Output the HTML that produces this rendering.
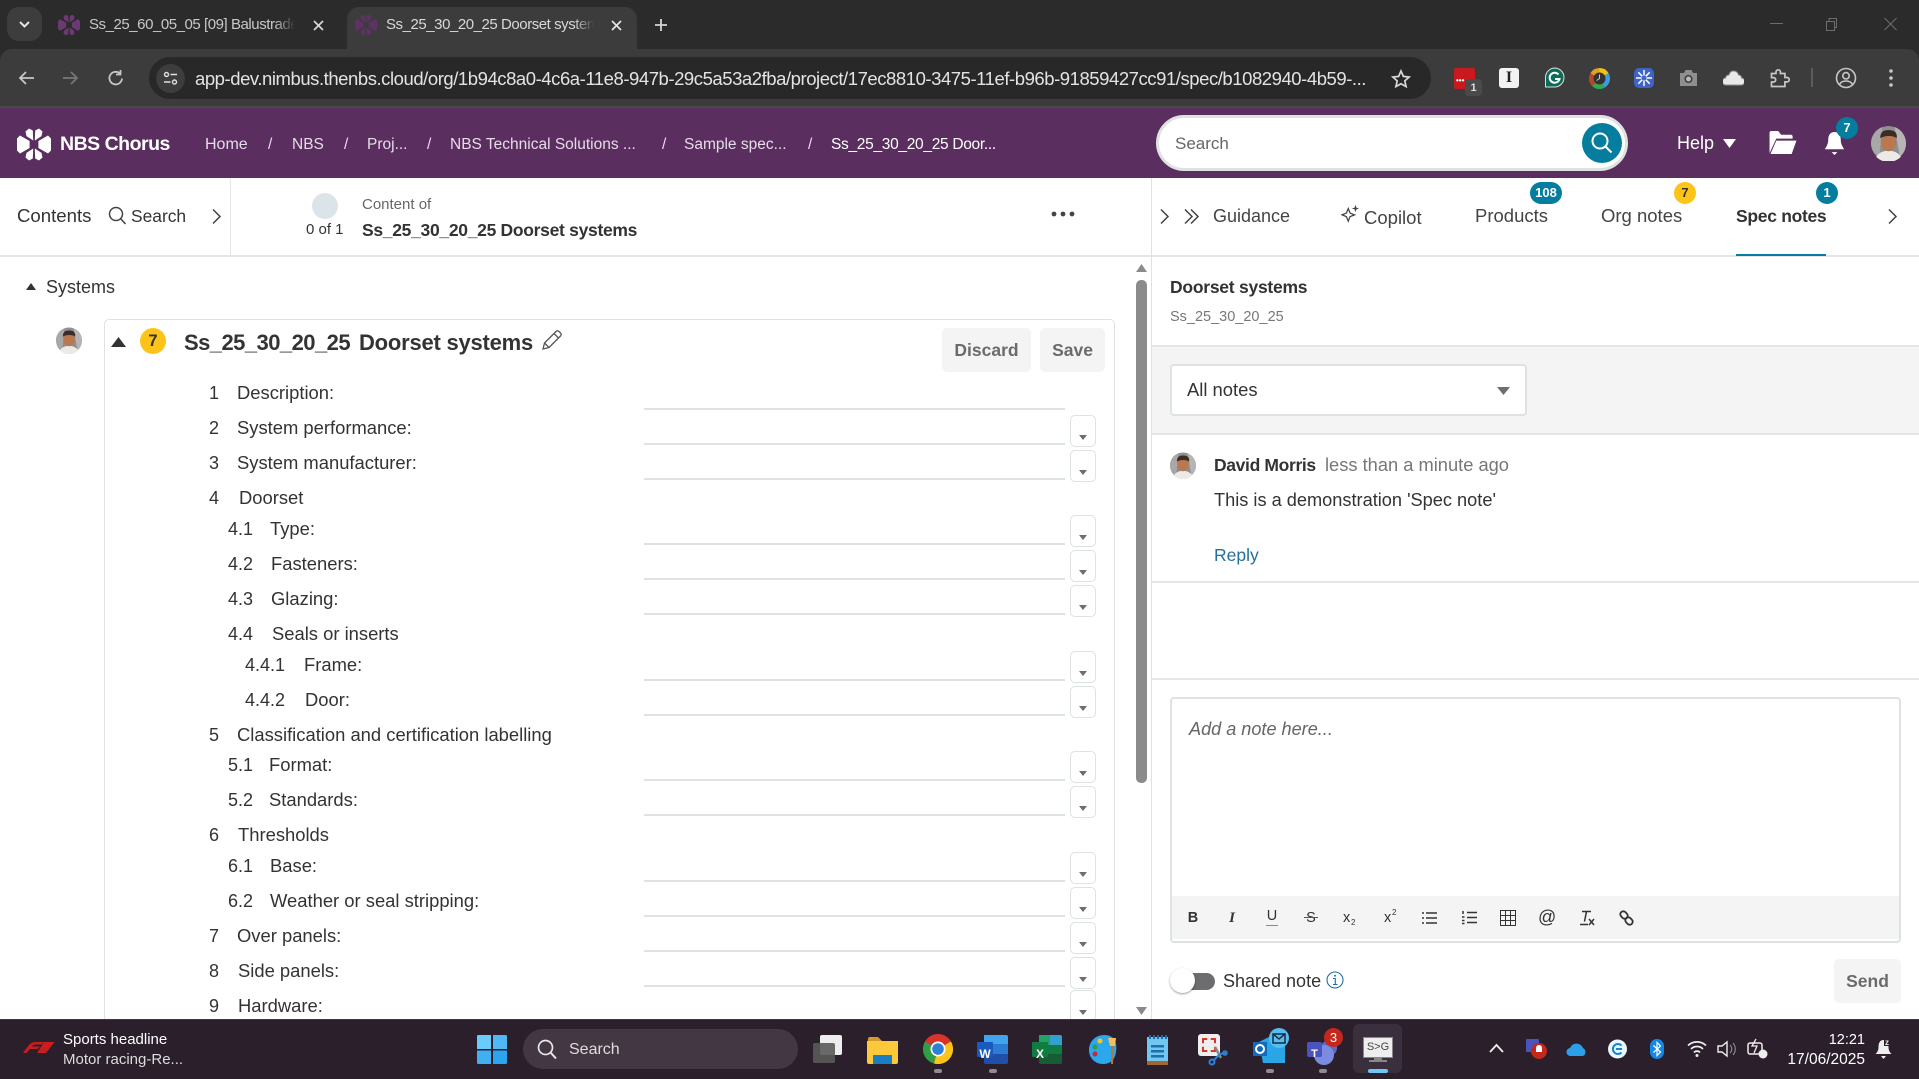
<!DOCTYPE html>
<html lang="en"><head><meta charset="utf-8"><title>Ss_25_30_20_25 Doorset systems</title>
<style>
html,body{margin:0;padding:0;background:#fff}
#p{position:relative;width:1919px;height:1079px;overflow:hidden;font-family:"Liberation Sans",sans-serif;color:#2b2b2b;background:#fff}
#p div,#p svg,#p span{position:absolute}
.t{white-space:nowrap;line-height:20px;height:20px}
.l{font-size:18.4px;color:#333}
.n{font-size:18px;color:#333}
.r{left:644px;width:421px;height:2px;background:#dde2e2}
.b{left:1070px;width:24px;height:30px;border:1px solid #dde2e2;border-radius:5px;background:#fff}
.b:after{content:"";position:absolute;left:8px;bottom:6px;border-left:4.5px solid transparent;border-right:4.5px solid transparent;border-top:5px solid #6e6e6e}
.g{width:34px;height:34px;border-radius:6px}
.tab{top:206px;font-size:18.5px;color:#444}
.bc{top:135px;font-size:15.5px;color:#e6dce8}
</style></head><body><div id="p">
<svg width="0" height="0" style="position:absolute"><defs>
<symbol id="logo" viewBox="0 0 34 34"><g fill="currentColor">
<path d="M12 1 15.8 3 16.2 13 9.5 8.600 8.500 4z"/><path d="M22 1 18.2 3 17.8 13 24.5 8.600 25.500 4z"/><path d="M0 11 3 8 12.600 13.500 12.600 20.500 3 26 0 23z"/><path d="M34 11 31 8 21.400 13.500 21.400 20.500 31 26 34 23z"/><path d="M12 33 15.800 31 16.200 21 9.500 25.400 8.500 30z"/><path d="M22 33 18.200 31 17.800 21 24.500 25.400 25.500 30z"/></g></symbol>
<symbol id="face" viewBox="0 0 34 34"><circle cx="17" cy="17" r="17" fill="#8f8f8f"/><path d="M0 17A17 17 0 0 1 11 1L8 30A17 17 0 0 1 0 17z" fill="#a8a8a8"/><path d="M23 1A17 17 0 0 1 34 17 17 17 0 0 1 28 30z" fill="#b5b5b5"/><path d="M5 30C8 25 13 24 17 24s9 1 12 6A17 17 0 0 1 5 30z" fill="#eceae6"/><ellipse cx="17" cy="15" rx="7.500" ry="9.500" fill="#b9784f"/><path d="M9 12C9 5 13 4 17 4s9 1 8 8c-3-3-12-3-16 0z" fill="#3b2c28"/></symbol>
</defs></svg>

<!-- tab strip -->
<div style="left:0;top:0;width:1919px;height:70px;background:#2b2b2b"></div>
<div style="left:7px;top:7px;width:35px;height:34px;background:#3d3d3d;border-radius:12px"></div>
<svg style="left:18px;top:20px" width="13" height="9" viewBox="0 0 13 9"><path d="M2 2l4.500 4.500L11 2" fill="none" stroke="#e6e6e6" stroke-width="2"/></svg>
<svg style="left:58px;top:14px;color:#6b3a72" width="22" height="22"><use href="#logo"/></svg>
<div class="t" style="left:89px;top:15px;width:206px;overflow:hidden;font-size:15px;letter-spacing:-.45px;color:#c8c8c8">Ss_25_60_05_05 [09] Balustrade systems</div>
<div style="left:275px;top:12px;width:20px;height:26px;background:linear-gradient(90deg,rgba(43,43,43,0),#2b2b2b)"></div>
<svg style="left:312px;top:19px" width="13" height="13" viewBox="0 0 13 13"><path d="M2 2l9 9M11 2l-9 9" stroke="#d8d8d8" stroke-width="1.700"/></svg>
<div style="left:347px;top:7px;width:290px;height:43px;background:#3c3c3c;border-radius:12px 12px 0 0"></div>
<svg style="left:355px;top:14px;color:#5f3266" width="22" height="22"><use href="#logo"/></svg>
<div class="t" style="left:386px;top:15px;width:208px;overflow:hidden;font-size:15px;letter-spacing:-.45px;color:#d8d8d8">Ss_25_30_20_25 Doorset systems</div>
<div style="left:574px;top:12px;width:20px;height:26px;background:linear-gradient(90deg,rgba(60,60,60,0),#3c3c3c)"></div>
<svg style="left:610px;top:19px" width="13" height="13" viewBox="0 0 13 13"><path d="M2 2l9 9M11 2l-9 9" stroke="#e6e6e6" stroke-width="1.700"/></svg>
<svg style="left:654px;top:18px" width="14" height="14" viewBox="0 0 14 14"><path d="M7 1v12M1 7h12" stroke="#d6d6d6" stroke-width="1.800"/></svg>
<div style="left:1770px;top:23px;width:13px;height:1px;background:#6d6d6d"></div>
<svg style="left:1825px;top:17px" width="13" height="14" viewBox="0 0 13 14"><path d="M1.500 4.500h8v9h-8zM4 4.500V1.500h7.500v9H9.500" fill="none" stroke="#6d6d6d"/></svg>
<svg style="left:1884px;top:17px" width="13" height="14" viewBox="0 0 13 14"><path d="M.5 1l12 12M12.500 1l-12 12" stroke="#6d6d6d"/></svg>

<!-- toolbar -->
<div style="left:0;top:49px;width:1919px;height:58px;background:#3c3c3c;border-radius:12px 12px 0 0"></div>
<div style="left:0;top:106px;width:1919px;height:2px;background:#4a4a4a"></div>
<svg style="left:17px;top:69px" width="18" height="18" viewBox="0 0 18 18"><path d="M17 9H3M9 3 3 9l6 6" fill="none" stroke="#c7c7c7" stroke-width="1.800"/></svg>
<svg style="left:62px;top:69px" width="18" height="18" viewBox="0 0 18 18"><path d="M1 9h14M9 3l6 6-6 6" fill="none" stroke="#777" stroke-width="1.800"/></svg>
<svg style="left:107px;top:69px" width="18" height="18" viewBox="0 0 18 18"><path d="M15 9.500A6.300 6.300 0 1 1 13.200 4.700M13.500 1v4.500H9" fill="none" stroke="#c7c7c7" stroke-width="1.800"/></svg>
<div style="left:149px;top:57px;width:1282px;height:42px;background:#282828;border-radius:22px"></div>
<div style="left:156px;top:64px;width:29px;height:29px;background:#3d3d3d;border-radius:50%"></div>
<svg style="left:163px;top:71px" width="15" height="15" viewBox="0 0 15 15"><g fill="none" stroke="#e0e0e0" stroke-width="1.400"><circle cx="3.500" cy="3.500" r="2"/><path d="M7.500 3.500H14M1 11h6.500"/><circle cx="11.500" cy="11" r="2"/></g></svg>
<div class="t" style="left:195px;top:69px;font-size:18.5px;letter-spacing:-.45px;color:#e3e3e3">app-dev.nimbus.thenbs.cloud/org/1b94c8a0-4c6a-11e8-947b-29c5a53a2fba/project/17ec8810-3475-11ef-b96b-91859427cc91/spec/b1082940-4b59-...</div>
<svg style="left:1391px;top:69px" width="20" height="20" viewBox="0 0 20 20"><path d="M10 2l2.400 5.400 5.800.6-4.400 3.900 1.300 5.700L10 14.700l-5.100 2.900 1.300-5.700L1.800 8l5.800-.6z" fill="none" stroke="#d8d8d8" stroke-width="1.700"/></svg>
<!-- extensions -->
<div style="left:1454px;top:68px;width:21px;height:21px;background:#c8191f;border-radius:2px"></div>
<div class="t" style="left:1456px;top:71px;font-size:8px;color:#fff;font-weight:bold">•••</div>
<div style="left:1465px;top:79px;width:17px;height:17px;background:#4a4a4a;border-radius:4px"></div>
<div class="t" style="left:1465px;top:78px;width:17px;text-align:center;font-size:11px;font-weight:bold;color:#ddd">1</div>
<div style="left:1499px;top:68px;width:20px;height:20px;background:#f2f2f2;border-radius:3px"></div>
<div class="t" style="left:1499px;top:68px;width:20px;text-align:center;font:bold 16px/20px 'Liberation Serif',serif;color:#222">I</div>
<svg style="left:1544px;top:67px" width="21" height="23" viewBox="0 0 21 23"><path d="M10.500 1A9.500 9.500 0 0 1 10.500 20H1.500V10.500A9.500 9.500 0 0 1 10.500 1z" fill="#0d6b5a" stroke="#ddd"/><path d="M14.500 7.500a5 5 0 1 0 1 4.500H11" fill="none" stroke="#fff" stroke-width="2"/></svg>
<svg style="left:1589px;top:68px" width="21" height="21" viewBox="0 0 21 21"><path d="M10.500 10.500V0A10.500 10.500 0 0 1 19.600 5.200z" fill="#f2c21a"/><path d="M10.500 10.500 19.600 5.200A10.500 10.500 0 0 1 15.700 19.600z" fill="#3a9fe0"/><path d="M10.500 10.500 15.700 19.600A10.500 10.500 0 0 1 3 18z" fill="#35a853"/><path d="M10.500 10.500 3 18A10.500 10.500 0 0 1 1.400 5.200z" fill="#b5482a"/><path d="M10.500 10.500 1.400 5.200A10.500 10.500 0 0 1 10.500 0z" fill="#e0a020"/><circle cx="10.500" cy="10.500" r="6" fill="#333"/><path d="M10.500 6.500v4l-3 2" fill="none" stroke="#ccc"/></svg>
<div style="left:1634px;top:68px;width:20px;height:20px;background:#3f63c7;border-radius:5px"></div>
<svg style="left:1636px;top:70px" width="16" height="16" viewBox="0 0 16 16"><g stroke="#fff" stroke-width="1.500"><path d="M8 0v16M0 8h16M2.300 2.300l11.400 11.400M13.700 2.300 2.300 13.700"/></g><circle cx="8" cy="8" r="2.500" fill="#3f63c7"/></svg>
<svg style="left:1679px;top:69px" width="19" height="18" viewBox="0 0 19 18"><path d="M1 4h4l1.500-3h6L14 4h4v13H1z" fill="#8f8f8f"/><circle cx="9.500" cy="10" r="4" fill="#3c3c3c"/><circle cx="9.500" cy="10" r="2.500" fill="#bbb"/></svg>
<svg style="left:1723px;top:70px" width="21" height="16" viewBox="0 0 21 16"><path d="M3 15a3.500 3.500 0 0 1-.5-7C3 6 4.500 5 6 5c.7-2.600 2.300-4 4.500-4S15 2.400 15.500 5c1.500 0 3 1 3 3a3.500 3.500 0 0 1-.5 7z" fill="#e8e8e8" stroke="#8f8f8f"/></svg>
<svg style="left:1770px;top:68px" width="20" height="20" viewBox="0 0 20 20"><path d="M1.500 5.500h4.500V4a2.200 2.200 0 0 1 4.400 0v1.500h4.500v4H17a2.200 2.200 0 0 1 0 4.400h-2.100v4.600H1.500v-4.500h2a2.200 2.200 0 0 0 0-4.400h-2z" fill="none" stroke="#c7c7c7" stroke-width="1.700"/></svg>
<div style="left:1811px;top:68px;width:2px;height:19px;background:#5c5c5c"></div>
<svg style="left:1835px;top:67px" width="22" height="22" viewBox="0 0 22 22"><g fill="none" stroke="#c7c7c7" stroke-width="1.600"><circle cx="11" cy="11" r="9.500"/><circle cx="11" cy="8.800" r="3.200"/><path d="M4.500 17.500c1.200-2.500 3.500-3.500 6.500-3.500s5.300 1 6.500 3.500"/></g></svg>
<svg style="left:1889px;top:68px" width="4" height="20" viewBox="0 0 4 20"><g fill="#c7c7c7"><circle cx="2" cy="3" r="1.800"/><circle cx="2" cy="10" r="1.800"/><circle cx="2" cy="17" r="1.800"/></g></svg>

<!-- app bar -->
<div style="left:0;top:108px;width:1919px;height:70px;background:#5a2e5e"></div>
<svg style="left:17px;top:127px;color:#fff" width="34" height="35"><use href="#logo"/></svg>
<div class="t" style="left:60px;top:134px;font-size:19.5px;font-weight:bold;color:#fff;letter-spacing:-.5px">NBS Chorus</div>
<div class="t bc" style="left:205px;font-size:16px">Home</div>
<div class="t bc" style="left:268px">/</div>
<div class="t bc" style="left:292px">NBS</div>
<div class="t bc" style="left:344px">/</div>
<div class="t bc" style="left:367px">Proj...</div>
<div class="t bc" style="left:427px">/</div>
<div class="t bc" style="left:450px">NBS Technical Solutions ...</div>
<div class="t bc" style="left:662px">/</div>
<div class="t bc" style="left:684px">Sample spec...</div>
<div class="t bc" style="left:808px">/</div>
<div class="t bc" style="left:831px;color:#fff;letter-spacing:-.3px">Ss_25_30_20_25 Door...</div>
<div style="left:1156px;top:115px;width:466px;height:50px;background:#fff;border:3px solid #dfe2e2;border-radius:28px"></div>
<div class="t" style="left:1175px;top:134px;font-size:17px;color:#666">Search</div>
<div style="left:1582px;top:123px;width:40px;height:40px;background:#047d9f;border-radius:50%"></div>
<svg style="left:1590px;top:131px" width="25" height="25" viewBox="0 0 25 25"><circle cx="10" cy="10" r="7.500" fill="none" stroke="#fff" stroke-width="2"/><path d="M15.500 15.500l6 6" stroke="#fff" stroke-width="2"/></svg>
<div class="t" style="left:1677px;top:133px;font-size:18px;color:#fff">Help</div>
<svg style="left:1723px;top:139px" width="13" height="9" viewBox="0 0 13 9"><path d="M0 0h13L6.500 9z" fill="#fff"/></svg>
<svg style="left:1768px;top:130px" width="30" height="25" viewBox="0 0 30 26"><path d="M1 24V3a2 2 0 0 1 2-2h7l3 4h10a2 2 0 0 1 2 2v2H8z" fill="#fff"/><path d="M8 11h21l-5 14H2z" fill="#fff"/></svg>
<svg style="left:1824px;top:131px" width="21" height="25" viewBox="0 0 21 26"><path d="M10.500 1c4.500 0 6.500 3.500 6.500 8 0 4.500 1.500 6.500 3.500 10H.5c2-3.500 3.500-5.500 3.500-10 0-4.500 2-8 6.500-8z" fill="#fff"/><path d="M7.500 22h6L10.500 25z" fill="#fff"/></svg>
<div style="left:1836px;top:117px;width:22px;height:22px;background:#047d9f;border-radius:50%"></div>
<div class="t" style="left:1836px;top:118px;width:22px;text-align:center;font-size:13px;font-weight:bold;color:#fff">7</div>
<svg style="left:1871px;top:126px" width="35" height="35"><use href="#face"/></svg>

<!-- sub header -->
<div style="left:0;top:255px;width:1919px;height:2px;background:#e3e6e6"></div>
<div style="left:230px;top:178px;width:1px;height:77px;background:#e6e8e8"></div>
<div style="left:1151px;top:178px;width:1px;height:842px;background:#dde2e2"></div>
<div class="t" style="left:17px;top:206px;font-size:18.6px;color:#333">Contents</div>
<svg style="left:108px;top:206px" width="18" height="19" viewBox="0 0 18 19"><circle cx="8" cy="8" r="6.500" fill="none" stroke="#444" stroke-width="1.500"/><path d="M12.500 12.500l5 5.500" stroke="#444" stroke-width="1.500"/></svg>
<div class="t" style="left:131px;top:206px;font-size:17.4px;color:#333">Search</div>
<svg style="left:211px;top:208px" width="11" height="17" viewBox="0 0 11 17"><path d="M2 1.500l7 7-7 7" fill="none" stroke="#444" stroke-width="1.500"/></svg>
<div style="left:312px;top:193px;width:26px;height:26px;border-radius:50%;background:#dbe4e8"></div>
<div class="t" style="left:306px;top:220px;font-size:15px;color:#333">0 of 1</div>
<div class="t" style="left:362px;top:195px;font-size:15px;color:#666">Content of</div>
<div class="t" style="left:362px;top:220px;font-size:17.5px;font-weight:bold;color:#333;letter-spacing:-.3px">Ss_25_30_20_25 Doorset systems</div>
<svg style="left:1051px;top:211px" width="24" height="6" viewBox="0 0 24 6"><g fill="#444"><circle cx="3" cy="3" r="2.400"/><circle cx="12" cy="3" r="2.400"/><circle cx="21" cy="3" r="2.400"/></g></svg>
<svg style="left:1159px;top:208px" width="11" height="17" viewBox="0 0 11 17"><path d="M2 1.500l7 7-7 7" fill="none" stroke="#444" stroke-width="1.500"/></svg>
<svg style="left:1183px;top:208px" width="17" height="17" viewBox="0 0 17 17"><path d="M2 1.500l7 7-7 7M8 1.500l7 7-7 7" fill="none" stroke="#444" stroke-width="1.500"/></svg>
<div class="t tab" style="left:1213px;font-size:18px">Guidance</div>
<svg style="left:1341px;top:204px" width="19" height="19" viewBox="0 0 21 21"><path d="M8 5l2 5 5 2-5 2-2 5-2-5-5-2 5-2z" fill="none" stroke="#444" stroke-width="1.400"/><path d="M16 1l1 3 3 1-3 1-1 3-1-3-3-1 3-1z" fill="#444"/></svg>
<div class="t tab" style="left:1364px;top:208px">Copilot</div>
<div class="t tab" style="left:1475px">Products</div>
<div style="left:1530px;top:182px;width:32px;height:22px;background:#047d9f;border-radius:11px"></div>
<div class="t" style="left:1530px;top:183px;width:32px;text-align:center;font-size:13px;font-weight:bold;color:#fff">108</div>
<div class="t tab" style="left:1601px">Org notes</div>
<div style="left:1674px;top:182px;width:22px;height:22px;background:#fcc419;border-radius:50%"></div>
<div class="t" style="left:1674px;top:183px;width:22px;text-align:center;font-size:13px;font-weight:bold;color:#333">7</div>
<div class="t" style="left:1736px;top:206px;font-size:17.5px;font-weight:bold;color:#333;letter-spacing:-.3px">Spec notes</div>
<div style="left:1816px;top:182px;width:22px;height:22px;background:#047d9f;border-radius:50%"></div>
<div class="t" style="left:1816px;top:183px;width:22px;text-align:center;font-size:13px;font-weight:bold;color:#fff">1</div>
<div style="left:1736px;top:254px;width:90px;height:2px;background:#047d9f"></div>
<svg style="left:1887px;top:208px" width="11" height="17" viewBox="0 0 11 17"><path d="M2 1.500l7 7-7 7" fill="none" stroke="#444" stroke-width="1.500"/></svg>

<!-- left column -->
<svg style="left:26px;top:283px" width="10" height="7" viewBox="0 0 10 7"><path d="M5 0l5 7H0z" fill="#333"/></svg>
<div class="t" style="left:46px;top:277px;font-size:18px;color:#333">Systems</div>
<svg style="left:56px;top:327px" width="26" height="27"><use href="#face"/></svg>
<div style="left:104px;top:319px;width:1009px;height:720px;border:1px solid #dde2e2;border-radius:5px"></div>
<svg style="left:111px;top:337px" width="15" height="10" viewBox="0 0 15 10"><path d="M7.500 0L15 10H0z" fill="#333"/></svg>
<div style="left:140px;top:328px;width:26px;height:26px;background:#fcc419;border-radius:50%"></div>
<div class="t" style="left:140px;top:331px;width:26px;text-align:center;font-size:16.5px;font-weight:bold;color:#333">7</div>
<div class="t" style="left:184px;top:332px;font-size:22px;line-height:22px;font-weight:bold;color:#333;letter-spacing:-.55px">Ss_25_30_20_25</div>
<div class="t" style="left:359px;top:332px;font-size:22px;line-height:22px;font-weight:bold;color:#333;letter-spacing:-.22px">Doorset systems</div>
<svg style="left:540px;top:328px" width="24" height="24" viewBox="0 0 24 24"><path d="M3 21l1.500-6L16 3.500a2 2 0 0 1 3 0l1.500 1.500a2 2 0 0 1 0 3L9 19.500zM14 5.500l4.500 4.500M4.500 15 9 19.500" fill="none" stroke="#555" stroke-width="1.300"/></svg>
<div style="left:942px;top:328px;width:89px;height:44px;background:#f4f4f4;border-radius:5px"></div>
<div class="t" style="left:942px;top:340px;width:89px;text-align:center;font-size:17.5px;font-weight:bold;color:#6b6b6b">Discard</div>
<div style="left:1040px;top:328px;width:65px;height:44px;background:#f4f4f4;border-radius:5px"></div>
<div class="t" style="left:1040px;top:340px;width:65px;text-align:center;font-size:17.5px;font-weight:bold;color:#6b6b6b">Save</div>

<!-- rows -->
<div class="t n" style="left:209px;top:383px">1</div><div class="t l" style="left:237px;top:383px">Description:</div><div class="r" style="top:408px"></div>
<div class="t n" style="left:209px;top:418px">2</div><div class="t l" style="left:237px;top:418px">System performance:</div><div class="r" style="top:443px"></div><div class="b" style="top:415px"></div>
<div class="t n" style="left:209px;top:453px">3</div><div class="t l" style="left:237px;top:453px">System manufacturer:</div><div class="r" style="top:478px"></div><div class="b" style="top:450px"></div>
<div class="t n" style="left:209px;top:488px">4</div><div class="t l" style="left:239px;top:488px">Doorset</div>
<div class="t n" style="left:228px;top:519px">4.1</div><div class="t l" style="left:270px;top:519px">Type:</div><div class="r" style="top:543px"></div><div class="b" style="top:515px"></div>
<div class="t n" style="left:228px;top:554px">4.2</div><div class="t l" style="left:271px;top:554px">Fasteners:</div><div class="r" style="top:578px"></div><div class="b" style="top:550px"></div>
<div class="t n" style="left:228px;top:589px">4.3</div><div class="t l" style="left:271px;top:589px">Glazing:</div><div class="r" style="top:613px"></div><div class="b" style="top:585px"></div>
<div class="t n" style="left:228px;top:624px">4.4</div><div class="t l" style="left:272px;top:624px">Seals or inserts</div>
<div class="t n" style="left:245px;top:655px">4.4.1</div><div class="t l" style="left:304px;top:655px">Frame:</div><div class="r" style="top:679px"></div><div class="b" style="top:651px"></div>
<div class="t n" style="left:245px;top:690px">4.4.2</div><div class="t l" style="left:305px;top:690px">Door:</div><div class="r" style="top:714px"></div><div class="b" style="top:686px"></div>
<div class="t n" style="left:209px;top:725px">5</div><div class="t l" style="left:237px;top:725px">Classification and certification labelling</div>
<div class="t n" style="left:228px;top:755px">5.1</div><div class="t l" style="left:269px;top:755px">Format:</div><div class="r" style="top:779px"></div><div class="b" style="top:751px"></div>
<div class="t n" style="left:228px;top:790px">5.2</div><div class="t l" style="left:269px;top:790px">Standards:</div><div class="r" style="top:814px"></div><div class="b" style="top:786px"></div>
<div class="t n" style="left:209px;top:825px">6</div><div class="t l" style="left:238px;top:825px">Thresholds</div>
<div class="t n" style="left:228px;top:856px">6.1</div><div class="t l" style="left:270px;top:856px">Base:</div><div class="r" style="top:880px"></div><div class="b" style="top:852px"></div>
<div class="t n" style="left:228px;top:891px">6.2</div><div class="t l" style="left:270px;top:891px">Weather or seal stripping:</div><div class="r" style="top:915px"></div><div class="b" style="top:887px"></div>
<div class="t n" style="left:209px;top:926px">7</div><div class="t l" style="left:237px;top:926px">Over panels:</div><div class="r" style="top:950px"></div><div class="b" style="top:922px"></div>
<div class="t n" style="left:209px;top:961px">8</div><div class="t l" style="left:238px;top:961px">Side panels:</div><div class="r" style="top:985px"></div><div class="b" style="top:957px"></div>
<div class="t n" style="left:209px;top:996px">9</div><div class="t l" style="left:238px;top:996px">Hardware:</div><div class="b" style="top:990px"></div>

<!-- scrollbar -->
<svg style="left:1136px;top:264px" width="11" height="8" viewBox="0 0 11 8"><path d="M5.500 0 11 8H0z" fill="#8b8b8b"/></svg>
<div style="left:1136px;top:280px;width:11px;height:503px;background:#8b8b8b;border-radius:5px"></div>
<svg style="left:1136px;top:1007px" width="11" height="8" viewBox="0 0 11 8"><path d="M5.500 8 11 0H0z" fill="#8b8b8b"/></svg>

<!-- right panel -->
<div class="t" style="left:1170px;top:277px;font-size:17.5px;font-weight:bold;color:#333;letter-spacing:-.25px">Doorset systems</div>
<div class="t" style="left:1170px;top:307px;font-size:14.5px;color:#777">Ss_25_30_20_25</div>
<div style="left:1152px;top:345px;width:767px;height:90px;background:#f4f4f4;border-top:2px solid #e3e6e6;border-bottom:2px solid #e3e6e6;box-sizing:border-box"></div>
<div style="left:1170px;top:364px;width:353px;height:48px;background:#fff;border:2px solid #dde2e2;border-radius:4px"></div>
<div class="t" style="left:1187px;top:380px;font-size:18.4px;color:#333">All notes</div>
<svg style="left:1497px;top:387px" width="13" height="8" viewBox="0 0 13 8"><path d="M0 0h13L6.500 8z" fill="#6e6e6e"/></svg>
<svg style="left:1170px;top:452px" width="26" height="27"><use href="#face"/></svg>
<div class="t" style="left:1214px;top:455px;font-size:17.5px;font-weight:bold;color:#333;letter-spacing:-.35px">David Morris</div>
<div class="t" style="left:1325px;top:455px;font-size:18.3px;color:#777">less than a minute ago</div>
<div class="t" style="left:1214px;top:490px;font-size:18.2px;color:#333">This is a demonstration 'Spec note'</div>
<div class="t" style="left:1214px;top:545px;font-size:17.5px;color:#236f9d">Reply</div>
<div style="left:1152px;top:581px;width:767px;height:2px;background:#e3e6e6"></div>
<div style="left:1152px;top:678px;width:767px;height:2px;background:#e3e6e6"></div>
<div style="left:1170px;top:697px;width:727px;height:242px;background:#fff;border:2px solid #dde2e2;border-radius:4px"></div>
<div style="left:1172px;top:896px;width:727px;height:43px;background:#f4f4f4"></div>
<div class="t" style="left:1189px;top:719px;font-size:18.1px;font-style:italic;color:#666">Add a note here...</div>
<div class="t" style="left:1187px;top:908px;width:12px;text-align:center;font-size:14.500px;font-weight:bold;color:#333">B</div>
<div class="t" style="left:1226px;top:908px;width:12px;text-align:center;font:italic bold 15px/20px 'Liberation Serif',serif;color:#333">I</div>
<div class="t" style="left:1266px;top:906px;width:12px;text-align:center;font-size:14.500px;color:#333">U</div>
<div style="left:1266px;top:925px;width:12px;height:1px;background:#888"></div>
<div class="t" style="left:1305px;top:908px;width:12px;text-align:center;font-size:14.500px;color:#333">S</div>
<div style="left:1304px;top:917px;width:14px;height:1px;background:#555"></div>
<div class="t" style="left:1343px;top:908px;font-size:14.500px;color:#333">x</div><div class="t" style="left:1351px;top:913px;font-size:8px;color:#333">2</div>
<div class="t" style="left:1384px;top:908px;font-size:14.500px;color:#333">x</div><div class="t" style="left:1392px;top:903px;font-size:8px;color:#333">2</div>
<svg style="left:1422px;top:911px" width="15" height="14" viewBox="0 0 15 14"><path d="M4 2h11M4 7h11M4 12h11M0 2h2M0 7h2M0 12h2" stroke="#333" stroke-width="1.500"/></svg>
<svg style="left:1462px;top:910px" width="15" height="15" viewBox="0 0 15 15"><path d="M5 2.500h10M5 7.500h10M5 12.500h10M1 1v3M0 7h2.500M0 10.500h2.500M0 13.500h2.500" stroke="#333" stroke-width="1.500"/></svg>
<svg style="left:1500px;top:910px" width="16" height="16" viewBox="0 0 16 16"><path d="M.5.5h15v15H.5zM.5 5.500h15M.5 10.500h15M5.500.5v15M10.500.5v15" fill="none" stroke="#333"/></svg>
<div class="t" style="left:1538px;top:907px;width:18px;text-align:center;font-size:18px;color:#333">@</div>
<svg style="left:1580px;top:910px" width="15" height="16" viewBox="0 0 15 16"><path d="M2 1.500h9M6.500 1.500l-2 10M0 14.500h8M9 9l5 6M14 9l-5 6" fill="none" stroke="#333" stroke-width="1.500"/></svg>
<svg style="left:1619px;top:910px" width="15" height="16" viewBox="0 0 15 16"><g fill="none" stroke="#333" stroke-width="1.800"><rect x="1" y="2" width="8" height="6" rx="3" transform="rotate(45 5 5)"/><rect x="6" y="8" width="8" height="6" rx="3" transform="rotate(45 10 11)"/></g></svg>
<div style="left:1172px;top:973px;width:43px;height:17px;background:#6d6c6f;border-radius:9px"></div>
<div style="left:1170px;top:968px;width:25px;height:25px;background:#fff;border-radius:50%;box-shadow:0 1px 2px rgba(0,0,0,.4)"></div>
<div class="t" style="left:1223px;top:971px;font-size:18px;color:#333">Shared note</div>
<svg style="left:1326px;top:971px" width="18" height="18" viewBox="0 0 18 18"><circle cx="9" cy="9" r="8" fill="none" stroke="#236f9d" stroke-width="1.100"/><path d="M7 7.500h2.300V13M7 13.500h4.500" fill="none" stroke="#236f9d" stroke-width="1.100"/><circle cx="9" cy="4.800" r="1" fill="#236f9d"/></svg>
<div style="left:1834px;top:959px;width:67px;height:44px;background:#f4f4f4;border-radius:5px"></div>
<div class="t" style="left:1834px;top:971px;width:67px;text-align:center;font-size:17.5px;font-weight:bold;color:#6b6b6b">Send</div>

<!-- taskbar -->
<div style="left:0;top:1019px;width:1919px;height:60px;background:#2a1f2b;border-top:1px solid #3a3a3a;box-sizing:border-box"></div>
<svg style="left:23px;top:1042px" width="32" height="11" viewBox="0 0 32 11"><path d="M0 11 6 3C8 1 10 0 13 0h8l-2.500 2.500H13.500C11 2.500 10 3 9 4.500H17L14.500 7H7L3.500 11z" fill="#c81e1e"/><path d="M21 0h10.500L23 11H14z" fill="#c81e1e"/></svg>
<div class="t" style="left:63px;top:1030px;font-size:15px;color:#fff">Sports headline</div>
<div class="t" style="left:63px;top:1050px;font-size:15px;color:#ddd">Motor racing-Re...</div>
<svg style="left:477px;top:1035px" width="30" height="29" viewBox="0 0 30 29"><path d="M0 1.500A1.500 1.500 0 0 1 1.500 0H14v14H0z" fill="#6bcbfb"/><path d="M16 0h12.500A1.500 1.500 0 0 1 30 1.500V14H16z" fill="#4fb8f5"/><path d="M0 15.500h14V29H1.500A1.500 1.500 0 0 1 0 27.500z" fill="#41b0f3"/><path d="M16 15.500h14v12a1.500 1.500 0 0 1-1.500 1.500H16z" fill="#2aa5ee"/></svg>
<div style="left:523px;top:1029px;width:275px;height:40px;background:#433743;border-radius:20px"></div>
<svg style="left:537px;top:1039px" width="20" height="21" viewBox="0 0 20 21"><circle cx="8.500" cy="8.500" r="7" fill="none" stroke="#e8e8e8" stroke-width="1.700"/><path d="M13.500 13.500l5.500 6" stroke="#e8e8e8" stroke-width="2"/></svg>
<div class="t" style="left:569px;top:1040px;font-size:16px;color:#ddd">Search</div>
<div style="left:820px;top:1035px;width:22px;height:20px;background:#eee;border-radius:2px"></div>
<div style="left:813px;top:1043px;width:22px;height:20px;background:rgba(90,90,90,.9);border-radius:2px"></div>
<svg style="left:867px;top:1036px" width="31" height="28" viewBox="0 0 31 28"><path d="M1 3a2 2 0 0 1 2-2h8l4 4v10H1z" fill="#d9982f"/><path d="M0 5h31v21a2 2 0 0 1-2 2H2a2 2 0 0 1-2-2z" fill="#fcc93a"/><path d="M6 19h19v9H6z" fill="#1b7dc2"/></svg>
<svg style="left:923px;top:1034px" width="30" height="30" viewBox="0 0 30 30"><circle cx="15" cy="15" r="15" fill="#d9342b"/><path d="M15 15 2 7.500A15 15 0 0 0 11 29.500z" fill="#2f9e44"/><path d="M15 15 11 29.500A15 15 0 0 0 28 7.500z" fill="#fcc419"/><circle cx="15" cy="15" r="7.500" fill="#fff"/><circle cx="15" cy="15" r="5.800" fill="#2e7fd6"/></svg>
<div style="left:934px;top:1069px;width:8px;height:4px;background:#8c8c8c;border-radius:2px"></div>
<svg style="left:977px;top:1035px" width="31" height="29" viewBox="0 0 31 29"><path d="M7 0h22a2 2 0 0 1 2 2v7H7z" fill="#41a5ee"/><path d="M7 9h24v10H7z" fill="#2b7cd3"/><path d="M7 19h24v8a2 2 0 0 1-2 2H9a2 2 0 0 1-2-2z" fill="#1f4fa8"/><rect x="0" y="7" width="16" height="15" rx="1" fill="#185abd"/></svg>
<div class="t" style="left:977px;top:1044px;width:16px;text-align:center;font-size:12px;font-weight:bold;color:#fff">W</div>
<div style="left:989px;top:1069px;width:8px;height:4px;background:#8c8c8c;border-radius:2px"></div>
<svg style="left:1032px;top:1035px" width="30" height="29" viewBox="0 0 30 29"><path d="M7 0h11v10H7z" fill="#21a366"/><path d="M18 0h10a2 2 0 0 1 2 2v8H18z" fill="#33a0d0"/><path d="M7 10h23v9H7z" fill="#107c41"/><path d="M7 19h23v8a2 2 0 0 1-2 2H9a2 2 0 0 1-2-2z" fill="#185c37"/><rect x="0" y="7" width="16" height="15" rx="1" fill="#107c41"/></svg>
<div class="t" style="left:1032px;top:1044px;width:16px;text-align:center;font-size:12px;font-weight:bold;color:#fff">X</div>
<svg style="left:1089px;top:1034px" width="29" height="31" viewBox="0 0 29 31"><path d="M15 1C6 1 0 8 0 16s6 14 14 14 12-5 13-12c1-6 1-17-12-17z" fill="#2ba7ee"/><circle cx="11" cy="7" r="2.500" fill="#fcc419"/><circle cx="6" cy="13" r="2.500" fill="#2f9e44"/><circle cx="6" cy="20" r="2.500" fill="#c92a2a"/><path d="M22 12h3l-1 18h-2z" fill="#b5763e"/><path d="M19 4h8l-1 8h-5z" fill="#f0c060"/></svg>
<svg style="left:1147px;top:1034px" width="21" height="31" viewBox="0 0 21 31"><path d="M0 3h21v25H0z" fill="#72c6f2"/><path d="M0 27h21v4H0z" fill="#a5662e"/><path d="M4 11h13v2.500H4zM4 16h13v2.500H4zM4 21h13v2.500H4z" fill="#1f6fa8"/><path d="M2 1h2v4H2zM6 1h2v4H6zM10 1h2v4h-2zM14 1h2v4h-2zM18 1h2v4h-2z" fill="#1b6fa8"/></svg>
<div style="left:1198px;top:1034px;width:22px;height:22px;background:#eee;border-radius:3px"></div>
<div style="left:1202px;top:1038px;width:10px;height:10px;border:2px dashed #d9342b"></div>
<svg style="left:1208px;top:1046px" width="20" height="20" viewBox="0 0 20 20"><path d="M7 1l6 11" stroke="#888" stroke-width="2.500"/><path d="M12 8l6-1" stroke="#2b84d9" stroke-width="2"/><circle cx="17" cy="7" r="2" fill="none" stroke="#2b84d9" stroke-width="1.500"/><circle cx="4" cy="16" r="2.500" fill="none" stroke="#2b84d9" stroke-width="2"/><path d="M12 8l-7 7" stroke="#2b84d9" stroke-width="2"/></svg>
<svg style="left:1253px;top:1028px" width="36" height="35" viewBox="0 0 36 35"><path d="M6 14 18 8l14 6v21H10z" fill="#2aa5e6"/><circle cx="26" cy="10" r="10" fill="#55bdf0"/><rect x="20" y="6" width="12" height="9" fill="none" stroke="#123" stroke-width="1.400"/><path d="M20 6l6 5 6-5" fill="none" stroke="#123" stroke-width="1.300"/><rect x="0" y="14" width="14" height="14" fill="#0f6cbd"/><circle cx="7" cy="21" r="4" fill="none" stroke="#fff" stroke-width="2"/></svg>
<div style="left:1266px;top:1069px;width:8px;height:4px;background:#8c8c8c;border-radius:2px"></div>
<svg style="left:1307px;top:1036px" width="30" height="30" viewBox="0 0 30 30"><circle cx="22" cy="12" r="8" fill="#5b6bc0"/><circle cx="17" cy="19" r="10" fill="#7b8ce0"/><rect x="0" y="6" width="15" height="15" rx="2" fill="#4b53bc"/></svg>
<div class="t" style="left:1307px;top:1044px;width:15px;text-align:center;font-size:11px;font-weight:bold;color:#fff">T</div>
<div style="left:1324px;top:1028px;width:19px;height:19px;background:#c4281c;border-radius:50%"></div>
<div class="t" style="left:1324px;top:1028px;width:19px;text-align:center;font-size:13px;color:#fff">3</div>
<div style="left:1319px;top:1069px;width:8px;height:4px;background:#8c8c8c;border-radius:2px"></div>
<div style="left:1353px;top:1024px;width:49px;height:49px;background:#3a2f3c;border-radius:6px"></div>
<div style="left:1363px;top:1037px;width:28px;height:19px;background:#eee;border:1px solid #888"></div>
<div class="t" style="left:1363px;top:1037px;width:30px;text-align:center;font-size:11px;color:#444">S&gt;G</div>
<div style="left:1374px;top:1057px;width:8px;height:4px;background:#888"></div>
<div style="left:1369px;top:1060px;width:18px;height:2px;background:#888"></div>
<div style="left:1368px;top:1069px;width:20px;height:4px;background:#6fc6f5;border-radius:2px"></div>
<svg style="left:1489px;top:1043px" width="15" height="10" viewBox="0 0 15 10"><path d="M1 9l6.500-7L14 9" fill="none" stroke="#eee" stroke-width="1.800"/></svg>
<svg style="left:1526px;top:1036px" width="22" height="25" viewBox="0 0 22 25"><rect x="0" y="3" width="13" height="13" rx="1" fill="#4b53bc"/><circle cx="13" cy="15" r="8" fill="#c4281c"/><path d="M13 9c2.500 0 3 2 3 4v3H10v-3c0-2 .5-4 3-4z" fill="#fff"/></svg>
<svg style="left:1566px;top:1040px" width="22" height="16" viewBox="0 0 22 16"><path d="M5 16a4 4 0 0 1-1-8 7 7 0 0 1 13 0 4.500 4.500 0 0 1 0 8z" fill="#2b9fe8"/></svg>
<svg style="left:1608px;top:1039px" width="19" height="20" viewBox="0 0 19 20"><circle cx="9.500" cy="10" r="9.500" fill="#eaf6ff"/><path d="M13.500 6.500a5 5 0 1 0 0 7" fill="none" stroke="#1487c9" stroke-width="2"/><path d="M8 10h6" stroke="#1487c9" stroke-width="2"/></svg>
<div style="left:1650px;top:1039px;width:14px;height:20px;border-radius:7px;background:#1487e6"></div>
<svg style="left:1651px;top:1041px" width="12" height="16" viewBox="0 0 12 16"><path d="M2.500 4.500l7 6.500-3.500 3.500V1.500L9.500 5l-7 6.500" fill="none" stroke="#fff" stroke-width="1.200"/></svg>
<svg style="left:1687px;top:1039px" width="20" height="18" viewBox="0 0 20 18"><g fill="none" stroke="#eee" stroke-width="1.700"><path d="M1 6.500a13 13 0 0 1 18 0M4 10a8.500 8.500 0 0 1 12 0M7 13.500a4 4 0 0 1 6 0"/></g><circle cx="10" cy="16.500" r="1.500" fill="#eee"/></svg>
<svg style="left:1717px;top:1040px" width="20" height="18" viewBox="0 0 20 18"><path d="M1 6h4l5-4v14l-5-4H1z" fill="none" stroke="#eee" stroke-width="1.400"/><path d="M13 5a5.500 5.500 0 0 1 0 8M16 3a9 9 0 0 1 0 12" fill="none" stroke="#888" stroke-width="1.200"/></svg>
<svg style="left:1747px;top:1038px" width="21" height="22" viewBox="0 0 21 22"><rect x="1" y="5" width="14" height="11" rx="2" fill="none" stroke="#eee" stroke-width="1.500"/><path d="M9 1 5 8h5l-3 7" fill="none" stroke="#eee" stroke-width="1.300"/><circle cx="16" cy="16" r="4.500" fill="#eee"/></svg>
<div class="t" style="left:1780px;top:1030px;width:85px;text-align:right;font-size:14.500px;color:#fff">12:21</div>
<div class="t" style="left:1780px;top:1050px;width:85px;text-align:right;font-size:15.5px;color:#fff">17/06/2025</div>
<svg style="left:1875px;top:1038px" width="17" height="22" viewBox="0 0 17 22"><path d="M8.500 2c3.500 0 5 3 5 7 0 3 1 5 3 7H.5c2-2 3-4 3-7 0-4 1.500-7 5-7z" fill="#eee"/><path d="M6 18h5l-2.500 3z" fill="#eee"/><rect x="9" y="0" width="8" height="8" fill="#2a1f2b"/><text x="10" y="7" font-size="8" font-weight="bold" fill="#eee" font-family="Liberation Sans">z</text></svg>
</div></body></html>
